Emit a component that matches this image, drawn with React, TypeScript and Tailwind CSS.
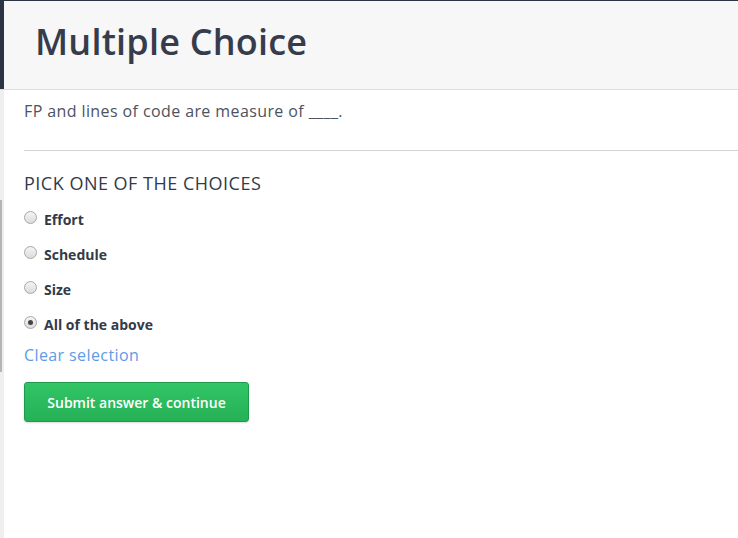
import React from "react";

const options = ["Effort", "Schedule", "Size", "All of the above"];

function Radio({ checked }: { checked: boolean }) {
  return (
    <span className="relative inline-flex h-[13px] w-[13px] shrink-0 items-center justify-center rounded-full border border-[#a8a8a8] bg-gradient-to-b from-[#f4f4f4] to-[#dcdcdc]">
      {checked && <span className="h-[5px] w-[5px] rounded-full bg-[#444]" />}
    </span>
  );
}

export default function App() {
  return (
    <div
      className="flex h-[538px] w-full flex-col overflow-hidden border-t border-[#2c3343] bg-white"
      style={{ fontFamily: "'Open Sans', sans-serif" }}
    >
      <div className="flex h-[89px] shrink-0 border-b border-[#dedede]">
        <div className="w-[4px] bg-[#2c3343]" />
        <div className="flex flex-1 items-center bg-[#f7f7f7] pl-[31px]">
          <h1 className="-mt-[6px] text-[36px] font-semibold leading-none tracking-[0.2px] text-[#363c4c]">
            Multiple Choice
          </h1>
        </div>
      </div>
      <div className="flex flex-1">
        <div className="flex w-[4px] flex-col bg-[#efefef]">
          <div className="mt-[110px] h-[172px] w-[2px] bg-[#b5b5b5]" />
        </div>
        <div className="flex-1 pl-[20px]">
          <p className="mt-[11px] text-[16px] leading-[20px] tracking-[0.4px] text-[#4d5260]">
            FP and lines of code are measure of ____.
          </p>
          <div className="mt-[29px] h-px bg-[#d4d4d4]" />
          <h2 className="mt-[21px] text-[18px] leading-[22px] tracking-[0.5px] text-[#333a48]">
            PICK ONE OF THE CHOICES
          </h2>
          <div className="mt-[17px] flex flex-col gap-[17px]">
            {options.map((o, i) => (
              <label key={o} className="flex h-[18px] items-center gap-[7px]">
                <span className="-mt-[5px] flex">
                  <Radio checked={i === 3} />
                </span>
                <span className="text-[14px] font-bold leading-[18px] text-[#333a48]">
                  {o}
                </span>
              </label>
            ))}
          </div>
          <div className="mt-[11px] text-[16px] leading-[20px] tracking-[0.4px] text-[#5e9be8]">
            Clear selection
          </div>
          <button className="mt-[17px] flex h-[40px] w-[225px] items-center justify-center rounded-[3px] border border-[#1f9a4a] bg-gradient-to-b from-[#31c566] to-[#26b156] text-[14px] font-semibold text-white shadow-[0_1px_2px_rgba(0,0,0,0.15)]">
            Submit answer &amp; continue
          </button>
        </div>
      </div>
    </div>
  );
}
